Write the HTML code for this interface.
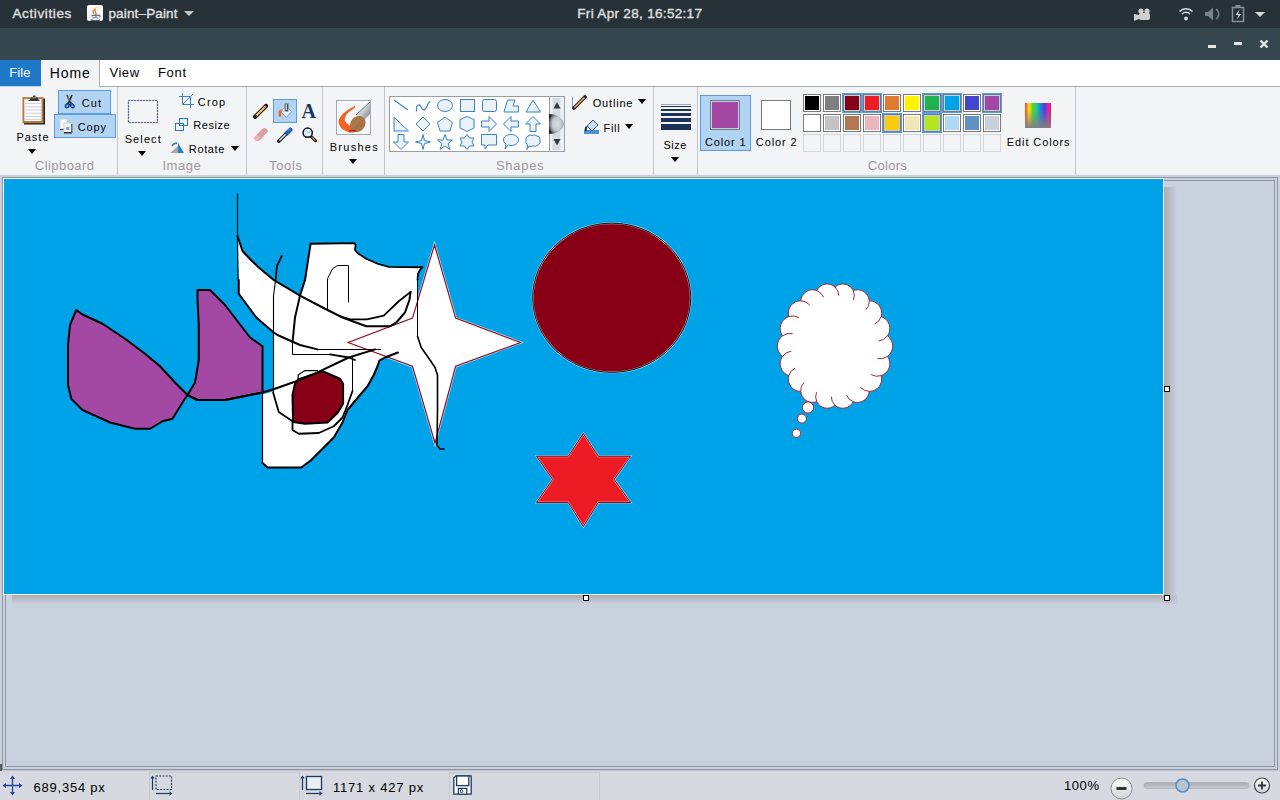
<!DOCTYPE html>
<html><head><meta charset="utf-8"><style>
html,body{margin:0;padding:0;width:1280px;height:800px;overflow:hidden;position:relative;background:#c9d1df}
.t{position:absolute;white-space:pre;font-family:"Liberation Sans",sans-serif}
svg{position:absolute}
</style></head><body>
<div style="position:absolute;left:0px;top:0px;width:1280px;height:28px;background:#263238"></div>
<div class="t" style="left:12.50px;top:6.77px;font-size:13.5px;line-height:13.5px;color:#e0e0e0;font-weight:400;letter-spacing:0.61px;-webkit-text-stroke:0.35px #e0e0e0">Activities</div>
<div style="position:absolute;left:87px;top:5px;width:16px;height:16px;background:linear-gradient(180deg,#ffffff,#eef0f4);border-radius:2px"></div>
<svg style="position:absolute;left:87px;top:5px" width="16" height="16">
<path d="M9.5 1.5 L10.5 3" stroke="#f0d070" stroke-width="1"/>
<path d="M8.5 3.5 Q7 5 8.5 6.5 Q9.5 8 8.5 10" stroke="#f07020" stroke-width="1.3" fill="none"/>
<path d="M6.5 5 Q5.5 6.5 6.5 8.5" stroke="#e85020" stroke-width="1.1" fill="none"/>
<path d="M4.5 11 Q8 9.5 12.5 10.5" stroke="#606870" stroke-width="1.2" fill="none"/>
<path d="M12 9.5 Q14 10.5 12.5 12.5" stroke="#606870" stroke-width="1" fill="none"/>
<path d="M5.5 13 Q8 12 11 13" stroke="#707880" stroke-width="1" fill="none"/>
<path d="M3.5 15 Q8 16.5 13 15" stroke="#404850" stroke-width="1.1" fill="none"/>
<circle cx="9" cy="11" r="0.8" fill="#3070c0"/><circle cx="5" cy="15" r="0.8" fill="#3070c0"/>
</svg>
<div class="t" style="left:108.40px;top:6.57px;font-size:13.5px;line-height:13.5px;color:#e0e0e0;font-weight:400;letter-spacing:0.16px;-webkit-text-stroke:0.35px #e0e0e0">paint–Paint</div>
<div style="position:absolute;left:184px;top:11px;width:0;height:0;border-left:5.0px solid transparent;border-right:5.0px solid transparent;border-top:5px solid #c8c8c8"></div>
<div class="t" style="left:577.30px;top:6.77px;font-size:13.5px;line-height:13.5px;color:#e0e0e0;font-weight:400;letter-spacing:0.32px;-webkit-text-stroke:0.35px #e0e0e0">Fri Apr 28, 16:52:17</div>
<svg style="position:absolute;left:1128px;top:0" width="150" height="28">
<g fill="#d0d0d0">
<circle cx="1141" cy="11" r="2.6" transform="translate(-1128,0)"/>
<circle cx="1147" cy="11" r="2.6" transform="translate(-1128,0)"/>
<rect x="11" y="13" width="11" height="7" rx="2"/>
<path d="M6 14 L11 15 L11 19 L6 21 Z"/>
</g>
<g fill="none" stroke="#d8d8d8" stroke-width="1.6">
<path d="M51.5 11.5 A9 9 0 0 1 64.5 11.5"/>
<path d="M54 14 A5.5 5.5 0 0 1 62 14"/>
</g>
<circle cx="58" cy="18.5" r="1.9" fill="#d8d8d8"/>
<g fill="#7b8388">
<path d="M77 12 h3 l5 -4.5 v13 l-5 -4.5 h-3 z"/>
</g>
<path d="M88 9 A6 6 0 0 1 88 19" stroke="#7b8388" stroke-width="1.5" fill="none"/>
<rect x="104.5" y="7.5" width="11" height="14" fill="none" stroke="#8a8f94" stroke-width="1.5"/>
<rect x="107.5" y="5" width="5" height="2" fill="#8a8f94"/>
<path d="M111.5 9.5 L107.5 15 h3 l-1.5 4.5 l4 -5.5 h-3 z" fill="#d8d8d8"/>
<path d="M127 12 h10 l-5 5 z" fill="#d8d8d8"/>
</svg>
<div style="position:absolute;left:0px;top:28px;width:1280px;height:32px;background:#37474f"></div>
<div style="position:absolute;left:1208px;top:45px;width:8px;height:3px;background:#e6e6e6"></div>
<div style="position:absolute;left:1234px;top:42px;width:8px;height:3px;background:#e6e6e6"></div>
<svg style="position:absolute;left:1258px;top:38px" width="12" height="12"><path d="M2.5 2.5 L9.5 9.5 M9.5 2.5 L2.5 9.5" stroke="#e6e6e6" stroke-width="2.4"/></svg>
<div style="position:absolute;left:0px;top:60px;width:1280px;height:26px;background:#ffffff"></div>
<div style="position:absolute;left:0px;top:60px;width:41px;height:26px;background:#1f77c7"></div>
<div class="t" style="left:9.20px;top:66.40px;font-size:13px;line-height:13px;color:#ffffff;font-weight:400;letter-spacing:0.1px;">File</div>
<div style="position:absolute;left:41px;top:60px;width:59px;height:27px;background:#f3f4f6;border-right:1px solid #a9adb2;box-sizing:border-box"></div>
<div style="position:absolute;left:100px;top:86px;width:1180px;height:1px;background:#a9adb2"></div>
<div class="t" style="left:49.80px;top:65.55px;font-size:14px;line-height:14px;color:#000;font-weight:400;letter-spacing:0.87px;">Home</div>
<div class="t" style="left:109.40px;top:66.40px;font-size:13px;line-height:13px;color:#000;font-weight:400;letter-spacing:0.57px;">View</div>
<div class="t" style="left:158.00px;top:66.40px;font-size:13px;line-height:13px;color:#000;font-weight:400;letter-spacing:0.67px;">Font</div>
<div style="position:absolute;left:0px;top:87px;width:1280px;height:88px;background:#f3f4f6"></div>
<div style="position:absolute;left:117px;top:87px;width:1px;height:88px;background:#c4c6ca"></div>
<div style="position:absolute;left:246px;top:87px;width:1px;height:88px;background:#c4c6ca"></div>
<div style="position:absolute;left:322px;top:87px;width:1px;height:88px;background:#c4c6ca"></div>
<div style="position:absolute;left:384px;top:87px;width:1px;height:88px;background:#c4c6ca"></div>
<div style="position:absolute;left:653px;top:87px;width:1px;height:88px;background:#c4c6ca"></div>
<div style="position:absolute;left:697px;top:87px;width:1px;height:88px;background:#c4c6ca"></div>
<div style="position:absolute;left:1075px;top:87px;width:1px;height:88px;background:#c4c6ca"></div>
<div class="t" style="left:34.80px;top:158.80px;font-size:13px;line-height:13px;color:#9c98a2;font-weight:400;letter-spacing:0.45px;">Clipboard</div>
<div class="t" style="left:162.40px;top:158.80px;font-size:13px;line-height:13px;color:#9c98a2;font-weight:400;letter-spacing:0.53px;">Image</div>
<div class="t" style="left:269.00px;top:158.80px;font-size:13px;line-height:13px;color:#9c98a2;font-weight:400;letter-spacing:0.65px;">Tools</div>
<div class="t" style="left:496.00px;top:158.80px;font-size:13px;line-height:13px;color:#9c98a2;font-weight:400;letter-spacing:0.7px;">Shapes</div>
<div class="t" style="left:867.75px;top:158.80px;font-size:13px;line-height:13px;color:#9c98a2;font-weight:400;letter-spacing:0.3px;">Colors</div>


<svg style="position:absolute;left:21px;top:94px" width="25" height="32">
<rect x="3" y="4.5" width="21" height="26" fill="#202020"/>
<rect x="1.5" y="3.2" width="21" height="26" fill="#b57a40"/>
<rect x="3.3" y="5" width="17.2" height="22" fill="#fbfbfd"/>
<g stroke="#c8d0d8" stroke-width="0.9"><path d="M3.5 9.5h17M3.5 12.8h17M3.5 16h17M3.5 19.3h17M3.5 22.5h17M3.5 25.5h17"/></g>
<path d="M8.5 6.5 L10 3.5 H11.5 L12.5 1.5 H14 L15 3.5 H16.5 L18 6.5 Z" fill="#303030"/>
<path d="M11.5 3.8 H15" stroke="#d0d0d0" stroke-width="0.8"/>
<rect x="7.5" y="5.8" width="11" height="1.2" fill="#404040"/>
</svg>
<div class="t" style="left:16.40px;top:132.29px;font-size:11px;line-height:11px;color:#000;font-weight:400;letter-spacing:1.0px;">Paste</div>
<div style="position:absolute;left:28px;top:149px;width:0;height:0;border-left:4.5px solid transparent;border-right:4.5px solid transparent;border-top:5px solid #000"></div>
<div style="position:absolute;left:58px;top:90px;width:53px;height:24px;background:#b3d3f2;border:1px solid #5a9de0;box-sizing:border-box"></div>
<div style="position:absolute;left:54px;top:114px;width:62px;height:24px;background:#b3d3f2;border:1px solid #5a9de0;box-sizing:border-box"></div>
<svg style="position:absolute;left:64px;top:94px" width="12" height="16">
<path d="M3 1 L6.8 9 M8 1 L4.5 9" stroke="#202020" stroke-width="1.6"/>
<path d="M3.6 1.5 L6.2 7.5" stroke="#b0b0b0" stroke-width="0.6"/>
<path d="M3.5 9 Q1 10 1 12.5 Q1.5 14.5 3.5 14 Q5.5 13 5.5 10 Z" fill="#1560d0" stroke="#0a1850" stroke-width="0.9"/>
<path d="M7.5 9 Q10 10 10.5 12.5 Q10 14.5 8 14 Q6 13 6 10 Z" fill="#1560d0" stroke="#0a1850" stroke-width="0.9"/>
<circle cx="3.2" cy="12" r="1" fill="#90c0f0"/><circle cx="8.3" cy="12" r="1" fill="#90c0f0"/>
</svg>
<div class="t" style="left:81.70px;top:98.09px;font-size:11px;line-height:11px;color:#000;font-weight:400;letter-spacing:1.15px;">Cut</div>
<svg style="position:absolute;left:60px;top:119px" width="13" height="15">
<rect x="0" y="0" width="7" height="10" fill="#fafafa"/>
<rect x="0" y="10" width="4" height="1" fill="#404040"/>
<rect x="0.5" y="0.5" width="6" height="9" fill="none" stroke="#e0e0e0" stroke-width="0.8"/>
<rect x="4" y="4" width="7.5" height="9.5" fill="#f4f6f8" stroke="#c8ccd0" stroke-width="0.8"/>
<rect x="4" y="13" width="8" height="1.5" fill="#303030"/>
<rect x="11.2" y="5" width="1.2" height="9" fill="#505050"/>
<rect x="6" y="8" width="3.5" height="3" fill="#7aa8d0"/>
</svg>
<div class="t" style="left:77.70px;top:122.29px;font-size:11px;line-height:11px;color:#000;font-weight:400;letter-spacing:0.87px;">Copy</div>
<svg style="position:absolute;left:127px;top:99px" width="32" height="26">
<rect x="1.5" y="1.5" width="29" height="22" fill="none" stroke="#b0b4bc" stroke-width="1.2"/>
<rect x="1.5" y="1.5" width="29" height="22" fill="none" stroke="#1a2e60" stroke-width="1.2" stroke-dasharray="1 2"/>
</svg>
<div class="t" style="left:124.70px;top:134.09px;font-size:11px;line-height:11px;color:#000;font-weight:400;letter-spacing:1.1px;">Select</div>
<div style="position:absolute;left:138px;top:151px;width:0;height:0;border-left:4.5px solid transparent;border-right:4.5px solid transparent;border-top:5px solid #000"></div>
<svg style="position:absolute;left:179px;top:93px" width="15" height="15">
<path d="M3.5 0 V11.5 H15 M0 3.5 H11.5 V15" stroke="#3b82c8" stroke-width="1" fill="none"/>
<path d="M4 11 L14 1" stroke="#3b82c8" stroke-width="1"/>
</svg>
<div class="t" style="left:197.80px;top:96.99px;font-size:11px;line-height:11px;color:#000;font-weight:400;letter-spacing:1.2px;">Crop</div>
<svg style="position:absolute;left:175px;top:118px" width="14" height="13">
<rect x="4.5" y="0.5" width="8" height="7" fill="#e8f0f8" stroke="#2a78c8"/>
<rect x="0.5" y="5.5" width="8" height="7" fill="none" stroke="#2a78c8"/>
</svg>
<div class="t" style="left:193.30px;top:119.99px;font-size:11px;line-height:11px;color:#000;font-weight:400;letter-spacing:0.54px;">Resize</div>
<svg style="position:absolute;left:170px;top:142px" width="15" height="12">
<path d="M0 11 L8 4 V11 Z" fill="#a8a8a8"/>
<path d="M8 1 L14 11 H8 Z" fill="#2a7ad0"/>
<path d="M2 4 Q4 1 7 1" stroke="#2a7ad0" stroke-width="1.3" fill="none"/>
</svg>
<div class="t" style="left:188.80px;top:143.69px;font-size:11px;line-height:11px;color:#000;font-weight:400;letter-spacing:0.64px;">Rotate</div>
<div style="position:absolute;left:231px;top:146px;width:0;height:0;border-left:4.5px solid transparent;border-right:4.5px solid transparent;border-top:5px solid #000"></div>
<div style="position:absolute;left:273px;top:99px;width:24px;height:24px;background:#b3d3f2;border:1px solid #5a9de0;box-sizing:border-box"></div>
<svg style="position:absolute;left:253px;top:103px" width="16" height="16">
<path d="M2.2 13.8 L13 3" stroke="#101010" stroke-width="4.2" stroke-linecap="round"/>
<path d="M3 13 L12.2 3.8" stroke="#f0b040" stroke-width="2.2"/>
<path d="M3.6 12 L11 4.6" stroke="#f8d890" stroke-width="0.8"/>
<path d="M11.2 4.8 L13 3" stroke="#e07080" stroke-width="2.2"/>
<path d="M2 14 L3.5 12.5" stroke="#303030" stroke-width="1.5"/>
</svg>
<svg style="position:absolute;left:276px;top:103px" width="18" height="17">
<path d="M10.2 3 L15.5 8.8 L10.2 14.5 L4.8 8.8 Z" fill="#e8f2fa" stroke="#6aa0c8" stroke-width="1"/>
<path d="M7 7 L10.2 3.5 L13 6.5 L9 10 Z" fill="#ffffff"/>
<rect x="8.6" y="0.5" width="3.8" height="8" fill="#505050"/>
<rect x="9.4" y="1.2" width="1.6" height="6" fill="#c0c0c0"/>
<path d="M5.5 6 Q3 6.5 2.5 9 L2.8 14 L5 13.5 L5.5 9 Z" fill="#f26a1a"/>
</svg>
<div class="t" style="left:301.5px;top:101px;font-family:'Liberation Serif',serif;font-weight:700;font-size:20px;line-height:20px;color:#1a3468;letter-spacing:0">A</div>
<svg style="position:absolute;left:253px;top:127px" width="16" height="15">
<path d="M1.5 10.5 L9.5 2 Q10.5 1 12 1.5 L14 2.5 Q15 3.5 14.5 4.5 L6.5 13 Q5.5 14 4 13.5 L2 12.5 Q1 11.5 1.5 10.5 Z" fill="#d8a0a0" stroke="#c89090" stroke-width="0.6"/>
<path d="M1.5 10.5 L4 8 L7 10.5 L4.5 13.5 Q3 13.5 2 12.5 Z" fill="#f0b8c4"/>
</svg>
<svg style="position:absolute;left:277px;top:127px" width="16" height="16">
<path d="M1.8 14.2 L9.5 6.5" stroke="#101010" stroke-width="3.4" stroke-linecap="round"/>
<path d="M2.4 13.6 L9 7" stroke="#e8f4fc" stroke-width="1.4"/>
<path d="M7.5 6 L10 8.5 L15 3.5 Q15.5 2 14 1 Q13 0.5 12 1.5 Z" fill="#1e66c8" stroke="#0a2a70" stroke-width="0.7"/>
<path d="M11 3.5 L13 1.5" stroke="#80b0f0" stroke-width="0.8"/>
</svg>
<svg style="position:absolute;left:302px;top:127px" width="15" height="16">
<path d="M9.2 9.5 L13.5 13.8" stroke="#101010" stroke-width="3" stroke-linecap="round"/>
<path d="M9.6 9.9 L13.2 13.5" stroke="#d09050" stroke-width="1.3"/>
<circle cx="5.7" cy="5.7" r="4.6" fill="#dff2fc" stroke="#101010" stroke-width="1.5"/>
<path d="M2.5 5 H9" stroke="#b0c8d8" stroke-width="1"/>
</svg>
<svg style="position:absolute;left:336px;top:100px" width="35" height="35">
<defs><linearGradient id="hd" x1="0" y1="0" x2="1" y2="1"><stop offset="0" stop-color="#ffffff"/><stop offset="0.5" stop-color="#c8ccd0"/><stop offset="1" stop-color="#6a7076"/></linearGradient></defs>
<rect x="0.5" y="0.5" width="34" height="34" fill="#f4f7fa" stroke="#a8aaae" stroke-width="1"/>
<path d="M34 2 L34 14 L26 22 L20 15 Z" fill="url(#hd)"/>
<path d="M34 2 L20 15" stroke="#50565c" stroke-width="0.8"/>
<path d="M19 6 Q17.5 5 18 6.5 Q14 8 9 12 Q3 17 2.5 22 Q3 29 12 32 Q16 33 19 32 L20 28 Q12 26 9 21 Q8 16 13 12 Q17 9 19 7.5 Z" fill="#f26424"/>
<ellipse cx="21.8" cy="24" rx="7.2" ry="8.6" transform="rotate(40 21.8 24)" fill="#a8784a"/>
<g fill="#c03040"><circle cx="24" cy="23" r="0.6"/><circle cx="26" cy="21" r="0.6"/><circle cx="22" cy="26" r="0.6"/><circle cx="25" cy="26" r="0.6"/><circle cx="20" cy="28" r="0.6"/><circle cx="27" cy="24" r="0.6"/></g>
<path d="M13 31 Q16 30 20 31" stroke="#b02030" stroke-width="1.5"/>
</svg>
<div class="t" style="left:329.70px;top:142.29px;font-size:11px;line-height:11px;color:#000;font-weight:400;letter-spacing:1.28px;">Brushes</div>
<div style="position:absolute;left:349px;top:159px;width:0;height:0;border-left:4.5px solid transparent;border-right:4.5px solid transparent;border-top:5px solid #000"></div>
<div style="position:absolute;left:389px;top:96px;width:176px;height:56px;background:#fff;border:1px solid #9a9ea4;box-sizing:border-box"></div>
<svg style="position:absolute;left:549px;top:96px" width="16" height="56">
<defs><radialGradient id="ball" cx="0.55" cy="0.5" r="0.6"><stop offset="0" stop-color="#dcdfe4"/><stop offset="0.55" stop-color="#c4c8cc"/><stop offset="0.85" stop-color="#707478"/><stop offset="1" stop-color="#202428"/></radialGradient></defs>
<rect x="0.5" y="0.5" width="15" height="55" fill="#eef2f6" stroke="#9a9ea4" stroke-width="1"/>
<rect x="3.5" y="2" width="8" height="52" fill="#d8dce2"/>
<path d="M4.5 12.5 L8 6 L11.5 12.5 Z" fill="#303840"/>
<path d="M4.5 43 L8 49.5 L11.5 43 Z" fill="#303840"/>
<path d="M0 18 A10 10 0 0 1 0 38 Z" fill="url(#ball)" transform="translate(0,0) scale(1.45,1) "/>
</svg>
<svg style="position:absolute;left:393px;top:99px;overflow:visible" width="17" height="17"><path d="M1 1 L15 11" stroke="#3a82c8" stroke-width="1.1" fill="none"/></svg>
<svg style="position:absolute;left:415px;top:99px;overflow:visible" width="17" height="17"><path d="M1.5 12.5 C1 6 4 4 6 8 C8 12 10 12 12 7 C13 4 14 3 15.5 2.5" stroke="#3a82c8" stroke-width="1.2" fill="none"/></svg>
<svg style="position:absolute;left:437px;top:99px;overflow:visible" width="17" height="17"><ellipse cx="8" cy="6.5" rx="7.5" ry="6" stroke="#3a82c8" fill="#eaf2f8"/></svg>
<svg style="position:absolute;left:459px;top:99px;overflow:visible" width="17" height="17"><rect x="1.5" y="0.5" width="14" height="12" stroke="#3a82c8" fill="#eaf2f8"/></svg>
<svg style="position:absolute;left:481px;top:99px;overflow:visible" width="17" height="17"><rect x="1.5" y="0.5" width="14" height="12" rx="2" stroke="#3a82c8" fill="#eaf2f8"/></svg>
<svg style="position:absolute;left:503px;top:99px;overflow:visible" width="17" height="17"><path d="M1 13 L4.5 1 H12 L10 7 H15.5 V13 Z" stroke="#3a82c8" fill="#eaf2f8"/></svg>
<svg style="position:absolute;left:525px;top:99px;overflow:visible" width="17" height="17"><path d="M1 13 L8 1 L15.5 13 Z" stroke="#3a82c8" fill="#eaf2f8"/></svg>
<svg style="position:absolute;left:393px;top:116px;overflow:visible" width="17" height="17"><path d="M1 1 L15.5 15 H1 Z" stroke="#3a82c8" fill="#eaf2f8"/></svg>
<svg style="position:absolute;left:415px;top:116px;overflow:visible" width="17" height="17"><path d="M8 1 L15 8 L8 15 L1 8 Z" stroke="#3a82c8" fill="#eaf2f8"/></svg>
<svg style="position:absolute;left:437px;top:116px;overflow:visible" width="17" height="17"><path d="M8 1 L15.5 6.5 L13 15 H3 L0.5 6.5 Z" stroke="#3a82c8" fill="#eaf2f8"/></svg>
<svg style="position:absolute;left:459px;top:116px;overflow:visible" width="17" height="17"><path d="M8 0.5 L15 3.5 V12 L8 15.5 L1 12 V3.5 Z" stroke="#3a82c8" fill="#eaf2f8"/></svg>
<svg style="position:absolute;left:481px;top:116px;overflow:visible" width="17" height="17"><path d="M0.5 5 H8 V0.5 L15.5 8 L8 15.5 V11 H0.5 Z" stroke="#3a82c8" fill="#eaf2f8"/></svg>
<svg style="position:absolute;left:503px;top:116px;overflow:visible" width="17" height="17"><path d="M15.5 5 H8 V0.5 L0.5 8 L8 15.5 V11 H15.5 Z" stroke="#3a82c8" fill="#eaf2f8"/></svg>
<svg style="position:absolute;left:525px;top:116px;overflow:visible" width="17" height="17"><path d="M5 15.5 V8 H0.5 L8 0.5 L15.5 8 H11 V15.5 Z" stroke="#3a82c8" fill="#eaf2f8"/></svg>
<svg style="position:absolute;left:393px;top:134px;overflow:visible" width="17" height="17"><path d="M5 0.5 V8 H0.5 L8 15.5 L15.5 8 H11 V0.5 Z" stroke="#3a82c8" fill="#eaf2f8"/></svg>
<svg style="position:absolute;left:415px;top:134px;overflow:visible" width="17" height="17"><path d="M8 0.5 L9.5 6.5 L15.5 8 L9.5 9.5 L8 15.5 L6.5 9.5 L0.5 8 L6.5 6.5 Z" stroke="#3a82c8" fill="#eaf2f8"/></svg>
<svg style="position:absolute;left:437px;top:134px;overflow:visible" width="17" height="17"><path d="M8 0.5 L10 6 H15.5 L11 9.5 L13 15.5 L8 12 L3 15.5 L5 9.5 L0.5 6 H6 Z" stroke="#3a82c8" fill="#eaf2f8"/></svg>
<svg style="position:absolute;left:459px;top:134px;overflow:visible" width="17" height="17"><path d="M8 0.5 L10.5 4 H15 L13 8 L15 12 H10.5 L8 15.5 L5.5 12 H1 L3 8 L1 4 H5.5 Z" stroke="#3a82c8" fill="#eaf2f8"/></svg>
<svg style="position:absolute;left:481px;top:134px;overflow:visible" width="17" height="17"><path d="M0.5 0.5 H15.5 V11 H7 L4 15 V11 H0.5 Z" stroke="#3a82c8" fill="#eaf2f8"/></svg>
<svg style="position:absolute;left:503px;top:134px;overflow:visible" width="17" height="17"><path d="M8 0.5 C13 0.5 15.5 3 15.5 6 C15.5 9.5 12 11.5 8 11.5 C6 11.5 5 11 5 11 L2 15 L3 10 C1.5 9 0.5 7.5 0.5 6 C0.5 3 3 0.5 8 0.5 Z" stroke="#3a82c8" fill="#eaf2f8"/></svg>
<svg style="position:absolute;left:525px;top:134px;overflow:visible" width="17" height="17"><path d="M3 2 Q5 0 7 1.5 Q10 0 12 2 Q15.5 2 15 6 Q16 9 13 11 Q11 13 8 12 Q6 13 4 12 L2 15.5 L2.5 11 Q0 9 1 6 Q0 3 3 2 Z" stroke="#3a82c8" fill="#eaf2f8"/></svg>
<svg style="position:absolute;left:571px;top:95px" width="17" height="15">
<path d="M1.5 2 V14" stroke="#6aa0d8" stroke-width="1"/>
<path d="M3 13 L14 2" stroke="#202020" stroke-width="3.6" stroke-linecap="round"/>
<path d="M3.5 12.5 L13.5 2.5" stroke="#f0a868" stroke-width="1.6"/>
</svg>
<div class="t" style="left:592.70px;top:98.09px;font-size:11px;line-height:11px;color:#000;font-weight:400;letter-spacing:0.82px;">Outline</div>
<div style="position:absolute;left:638px;top:99px;width:0;height:0;border-left:4.5px solid transparent;border-right:4.5px solid transparent;border-top:5px solid #000"></div>
<svg style="position:absolute;left:584px;top:119px" width="16" height="16">
<rect x="0" y="11" width="15" height="4" fill="#4a90d8"/>
<path d="M9 1 L14 6 L8 12 L3 7 Z" fill="#c8e0f0" stroke="#405060"/>
<path d="M3 8 Q1 9 2 12" stroke="#1a2a40" stroke-width="2" fill="none"/>
</svg>
<div class="t" style="left:603.50px;top:122.89px;font-size:11px;line-height:11px;color:#000;font-weight:400;letter-spacing:0.7px;">Fill</div>
<div style="position:absolute;left:625px;top:124px;width:0;height:0;border-left:4.5px solid transparent;border-right:4.5px solid transparent;border-top:5px solid #000"></div>
<div style="position:absolute;left:661px;top:104px;width:30px;height:1px;background:#a0a8b8"></div>
<div style="position:absolute;left:661px;top:106px;width:30px;height:1px;background:#1c3358"></div>
<div style="position:absolute;left:661px;top:109px;width:30px;height:2px;background:#1c3358"></div>
<div style="position:absolute;left:661px;top:113px;width:30px;height:3px;background:#1c3358"></div>
<div style="position:absolute;left:661px;top:118px;width:30px;height:4px;background:#1c3358"></div>
<div style="position:absolute;left:661px;top:124px;width:30px;height:6px;background:#1c3358"></div>
<div class="t" style="left:663.50px;top:139.99px;font-size:11px;line-height:11px;color:#000;font-weight:400;letter-spacing:0.5px;">Size</div>
<div style="position:absolute;left:671px;top:157px;width:0;height:0;border-left:4.5px solid transparent;border-right:4.5px solid transparent;border-top:5px solid #000"></div>
<div style="position:absolute;left:700px;top:95px;width:51px;height:56px;background:#b3d3f2;border:1px solid #5a9de0;box-sizing:border-box"></div>
<div style="position:absolute;left:710px;top:100px;width:30px;height:30px;background:#b3d3f2;border:1px solid #7a7a7a;box-sizing:border-box"></div>
<div style="position:absolute;left:712px;top:102px;width:26px;height:26px;background:#a349a4"></div>
<div class="t" style="left:704.90px;top:136.89px;font-size:11px;line-height:11px;color:#000;font-weight:400;letter-spacing:0.88px;">Color 1</div>
<div style="position:absolute;left:761px;top:100px;width:30px;height:30px;background:#fff;border:1px solid #7a7a7a;box-sizing:border-box"></div>
<div class="t" style="left:755.80px;top:136.89px;font-size:11px;line-height:11px;color:#000;font-weight:400;letter-spacing:0.9px;">Color 2</div>
<div style="position:absolute;left:803px;top:94px;width:18px;height:18px;background:#fff;border:1px solid #7a7a7a;box-sizing:border-box"></div>
<div style="position:absolute;left:805px;top:96px;width:14px;height:14px;background:#000000"></div>
<div style="position:absolute;left:803px;top:114px;width:18px;height:18px;background:#fff;border:1px solid #7a7a7a;box-sizing:border-box"></div>
<div style="position:absolute;left:805px;top:116px;width:14px;height:14px;background:#ffffff"></div>
<div style="position:absolute;left:803px;top:134px;width:18px;height:18px;border:1px solid #d4d6da;box-sizing:border-box"></div>
<div style="position:absolute;left:823px;top:94px;width:18px;height:18px;background:#fff;border:1px solid #7a7a7a;box-sizing:border-box"></div>
<div style="position:absolute;left:825px;top:96px;width:14px;height:14px;background:#7f7f7f"></div>
<div style="position:absolute;left:823px;top:114px;width:18px;height:18px;background:#fff;border:1px solid #7a7a7a;box-sizing:border-box"></div>
<div style="position:absolute;left:825px;top:116px;width:14px;height:14px;background:#c3c3c3"></div>
<div style="position:absolute;left:823px;top:134px;width:18px;height:18px;border:1px solid #d4d6da;box-sizing:border-box"></div>
<div style="position:absolute;left:842px;top:93px;width:20px;height:20px;background:#5a9de0"></div>
<div style="position:absolute;left:843px;top:94px;width:18px;height:18px;background:#b3d3f2;border:1px solid #7a7a7a;box-sizing:border-box"></div>
<div style="position:absolute;left:845px;top:96px;width:14px;height:14px;background:#880015"></div>
<div style="position:absolute;left:843px;top:114px;width:18px;height:18px;background:#fff;border:1px solid #7a7a7a;box-sizing:border-box"></div>
<div style="position:absolute;left:845px;top:116px;width:14px;height:14px;background:#b07850"></div>
<div style="position:absolute;left:843px;top:134px;width:18px;height:18px;border:1px solid #d4d6da;box-sizing:border-box"></div>
<div style="position:absolute;left:862px;top:93px;width:20px;height:20px;background:#5a9de0"></div>
<div style="position:absolute;left:863px;top:94px;width:18px;height:18px;background:#b3d3f2;border:1px solid #7a7a7a;box-sizing:border-box"></div>
<div style="position:absolute;left:865px;top:96px;width:14px;height:14px;background:#ed1c24"></div>
<div style="position:absolute;left:863px;top:114px;width:18px;height:18px;background:#fff;border:1px solid #7a7a7a;box-sizing:border-box"></div>
<div style="position:absolute;left:865px;top:116px;width:14px;height:14px;background:#ebb6c0"></div>
<div style="position:absolute;left:863px;top:134px;width:18px;height:18px;border:1px solid #d4d6da;box-sizing:border-box"></div>
<div style="position:absolute;left:883px;top:94px;width:18px;height:18px;background:#fff;border:1px solid #7a7a7a;box-sizing:border-box"></div>
<div style="position:absolute;left:885px;top:96px;width:14px;height:14px;background:#e07b30"></div>
<div style="position:absolute;left:882px;top:113px;width:20px;height:20px;background:#5a9de0"></div>
<div style="position:absolute;left:883px;top:114px;width:18px;height:18px;background:#b3d3f2;border:1px solid #7a7a7a;box-sizing:border-box"></div>
<div style="position:absolute;left:885px;top:116px;width:14px;height:14px;background:#ffc90e"></div>
<div style="position:absolute;left:883px;top:134px;width:18px;height:18px;border:1px solid #d4d6da;box-sizing:border-box"></div>
<div style="position:absolute;left:903px;top:94px;width:18px;height:18px;background:#fff;border:1px solid #7a7a7a;box-sizing:border-box"></div>
<div style="position:absolute;left:905px;top:96px;width:14px;height:14px;background:#fff200"></div>
<div style="position:absolute;left:903px;top:114px;width:18px;height:18px;background:#fff;border:1px solid #7a7a7a;box-sizing:border-box"></div>
<div style="position:absolute;left:905px;top:116px;width:14px;height:14px;background:#f0e6b8"></div>
<div style="position:absolute;left:903px;top:134px;width:18px;height:18px;border:1px solid #d4d6da;box-sizing:border-box"></div>
<div style="position:absolute;left:922px;top:93px;width:20px;height:20px;background:#5a9de0"></div>
<div style="position:absolute;left:923px;top:94px;width:18px;height:18px;background:#b3d3f2;border:1px solid #7a7a7a;box-sizing:border-box"></div>
<div style="position:absolute;left:925px;top:96px;width:14px;height:14px;background:#22b14c"></div>
<div style="position:absolute;left:922px;top:113px;width:20px;height:20px;background:#5a9de0"></div>
<div style="position:absolute;left:923px;top:114px;width:18px;height:18px;background:#b3d3f2;border:1px solid #7a7a7a;box-sizing:border-box"></div>
<div style="position:absolute;left:925px;top:116px;width:14px;height:14px;background:#b5e61d"></div>
<div style="position:absolute;left:923px;top:134px;width:18px;height:18px;border:1px solid #d4d6da;box-sizing:border-box"></div>
<div style="position:absolute;left:942px;top:93px;width:20px;height:20px;background:#5a9de0"></div>
<div style="position:absolute;left:943px;top:94px;width:18px;height:18px;background:#b3d3f2;border:1px solid #7a7a7a;box-sizing:border-box"></div>
<div style="position:absolute;left:945px;top:96px;width:14px;height:14px;background:#00a2e8"></div>
<div style="position:absolute;left:943px;top:114px;width:18px;height:18px;background:#fff;border:1px solid #7a7a7a;box-sizing:border-box"></div>
<div style="position:absolute;left:945px;top:116px;width:14px;height:14px;background:#b0d6f4"></div>
<div style="position:absolute;left:943px;top:134px;width:18px;height:18px;border:1px solid #d4d6da;box-sizing:border-box"></div>
<div style="position:absolute;left:963px;top:94px;width:18px;height:18px;background:#fff;border:1px solid #7a7a7a;box-sizing:border-box"></div>
<div style="position:absolute;left:965px;top:96px;width:14px;height:14px;background:#3f48cc"></div>
<div style="position:absolute;left:963px;top:114px;width:18px;height:18px;background:#fff;border:1px solid #7a7a7a;box-sizing:border-box"></div>
<div style="position:absolute;left:965px;top:116px;width:14px;height:14px;background:#6090c4"></div>
<div style="position:absolute;left:963px;top:134px;width:18px;height:18px;border:1px solid #d4d6da;box-sizing:border-box"></div>
<div style="position:absolute;left:982px;top:93px;width:20px;height:20px;background:#5a9de0"></div>
<div style="position:absolute;left:983px;top:94px;width:18px;height:18px;background:#b3d3f2;border:1px solid #7a7a7a;box-sizing:border-box"></div>
<div style="position:absolute;left:985px;top:96px;width:14px;height:14px;background:#a349a4"></div>
<div style="position:absolute;left:983px;top:114px;width:18px;height:18px;background:#fff;border:1px solid #7a7a7a;box-sizing:border-box"></div>
<div style="position:absolute;left:985px;top:116px;width:14px;height:14px;background:#c8d0de"></div>
<div style="position:absolute;left:983px;top:134px;width:18px;height:18px;border:1px solid #d4d6da;box-sizing:border-box"></div>
<svg style="position:absolute;left:1025px;top:103px" width="26" height="25">
<defs><linearGradient id="rb" x1="0" x2="1" y1="0" y2="0">
<stop offset="0" stop-color="#f04020"/><stop offset="0.15" stop-color="#f8e020"/><stop offset="0.3" stop-color="#60d020"/>
<stop offset="0.45" stop-color="#20c8a0"/><stop offset="0.6" stop-color="#2080e0"/><stop offset="0.75" stop-color="#5040d0"/>
<stop offset="0.9" stop-color="#e020c0"/><stop offset="1" stop-color="#f02020"/></linearGradient>
<linearGradient id="gr" x1="0" x2="0" y1="0" y2="1"><stop offset="0.3" stop-color="#808080" stop-opacity="0"/><stop offset="1" stop-color="#808080" stop-opacity="1"/></linearGradient></defs>
<rect width="26" height="25" fill="url(#rb)"/><rect width="26" height="25" fill="url(#gr)"/>
</svg>
<div class="t" style="left:1006.80px;top:136.89px;font-size:11px;line-height:11px;color:#000;font-weight:400;letter-spacing:0.9px;">Edit Colors</div>
<div style="position:absolute;left:0px;top:175px;width:1280px;height:596px;background:#c9d1df"></div>
<div style="position:absolute;left:2px;top:177px;width:1276px;height:593px;border:1px solid #8f959e;box-sizing:border-box"></div>
<div style="position:absolute;left:5px;top:180px;width:1270px;height:587px;border:1px solid #8f959e;box-sizing:border-box"></div>
<div style="position:absolute;left:1164px;top:187px;width:13px;height:408px;background:linear-gradient(90deg,#aaacb0,#c9d1df)"></div>
<div style="position:absolute;left:12px;top:595px;width:1152px;height:9px;background:linear-gradient(180deg,#aaacb0,#c9d1df)"></div>
<div style="position:absolute;left:1164px;top:595px;width:13px;height:9px;background:radial-gradient(ellipse at 0 0,#aaacb0,#c9d1df 100%)"></div>
<div style="position:absolute;left:3px;top:178px;width:1161px;height:417px;background:#ffffff"></div>
<div style="position:absolute;left:4px;top:179px;width:1159px;height:415px;background:#00a2e8;overflow:hidden"><svg style="position:absolute;left:0;top:0" width="1159" height="415" viewBox="4 179 1159 415" shape-rendering="geometricPrecision">
<polygon points="76.25,310.00 82.50,314.50 102.50,323.75 125.00,338.75 145.00,353.75 160.00,366.25 175.00,382.50 187.50,395.00 182.50,402.50 172.50,418.75 162.50,421.25 150.00,428.75 135.00,428.75 110.00,422.50 82.50,410.00 71.25,398.75 68.00,385.00 68.00,345.00 70.00,325.00" fill="#a349a4" stroke="#000" stroke-width="2" stroke-linejoin="round"/>
<polygon points="197.50,290.00 210.00,290.00 225.00,305.00 250.00,337.50 262.50,346.25 262.50,392.50 225.00,400.00 197.50,400.00 190.00,396.25 187.50,395.00 195.00,382.50 198.75,360.00 198.75,325.00 197.50,300.00" fill="#a349a4" stroke="#000" stroke-width="2" stroke-linejoin="round"/>
<polygon points="237.50,236.00 242.50,251.00 250.00,259.00 258.75,267.50 273.75,280.00 300.00,295.60 305.00,280.00 310.60,243.75 354.40,243.10 355.60,245.00 355.00,250.00 357.50,253.00 366.25,258.75 377.50,263.75 388.75,266.90 422.50,267.25 420.00,270.00 418.00,273.75 417.50,280.00 417.50,320.00 400.00,352.00 398.00,352.50 385.00,357.50 379.40,360.60 377.50,366.25 373.75,375.00 367.50,386.25 360.00,395.00 347.50,410.00 342.50,422.50 333.75,437.50 311.25,460.00 301.25,467.50 267.50,467.50 262.50,463.00 262.50,394.40 273.10,391.50 273.10,332.50 256.25,317.50 238.75,293.75 238.75,280.00" fill="#fff"/>
<polygon points="434.50,245.00 455.60,318.10 520.50,342.50 455.60,366.25 435.00,443.00 412.50,366.25 348.10,342.50 412.50,318.10" fill="#fff" stroke="#fff" stroke-width="2.4" stroke-opacity="0.75"/>
<polygon points="434.50,245.00 455.60,318.10 520.50,342.50 455.60,366.25 435.00,443.00 412.50,366.25 348.10,342.50 412.50,318.10" fill="none" stroke="#8e0c1e" stroke-width="1.15"/>
<polygon points="322.50,371.25 340.00,378.75 343.10,383.75 343.10,403.75 337.50,413.10 327.50,422.50 305.00,423.75 293.10,421.90 292.50,395.00 295.00,383.75 298.10,379.40" fill="#880015" stroke="#000" stroke-width="2" stroke-linejoin="round"/>
<polyline points="237.50,194.00 237.50,236.00 238.00,280.00" fill="none" stroke="#000" stroke-width="1.2" stroke-linejoin="round" stroke-linecap="round"/>
<polyline points="237.50,236.00 242.50,251.00 250.00,259.00 258.75,267.50 273.75,280.00 300.00,295.60 325.00,308.75 342.50,317.50 366.25,326.25 390.00,326.25 396.25,322.50 405.00,312.50 409.40,300.00 410.60,291.90" fill="none" stroke="#000" stroke-width="2" stroke-linejoin="round" stroke-linecap="round"/>
<polyline points="340.00,316.25 350.00,319.40 366.90,319.40 383.75,315.60 398.75,301.25 410.60,291.90" fill="none" stroke="#000" stroke-width="1.8" stroke-linejoin="round" stroke-linecap="round"/>
<polyline points="238.75,280.00 238.75,293.75 256.25,317.50 273.75,332.50 277.50,335.00 300.00,345.00 317.50,349.40" fill="none" stroke="#000" stroke-width="2" stroke-linejoin="round" stroke-linecap="round"/>
<polyline points="317.50,349.50 380.60,349.50" fill="none" stroke="#000" stroke-width="1" stroke-linejoin="round" stroke-linecap="round"/>
<polyline points="281.90,255.60 276.90,266.25 275.60,280.00" fill="none" stroke="#000" stroke-width="1.8" stroke-linejoin="round" stroke-linecap="round"/>
<polyline points="275.60,280.00 273.50,296.00 273.50,332.50 273.50,392.50" fill="none" stroke="#000" stroke-width="1.1" stroke-linejoin="round" stroke-linecap="round"/>
<polyline points="273.10,392.50 278.75,411.90 292.50,421.25" fill="none" stroke="#000" stroke-width="1.8" stroke-linejoin="round" stroke-linecap="round"/>
<polyline points="310.60,243.75 305.00,280.00 300.00,295.60 295.00,317.50 292.50,342.50" fill="none" stroke="#000" stroke-width="2" stroke-linejoin="round" stroke-linecap="round"/>
<polyline points="292.50,342.50 292.50,354.50 330.00,354.50" fill="none" stroke="#000" stroke-width="1" stroke-linejoin="round" stroke-linecap="round"/>
<polyline points="330.00,354.40 348.75,357.50 355.00,360.00" fill="none" stroke="#000" stroke-width="1.8" stroke-linejoin="round" stroke-linecap="round"/>
<polyline points="352.50,357.50 352.50,391.00" fill="none" stroke="#000" stroke-width="1" stroke-linejoin="round" stroke-linecap="round"/>
<polyline points="310.60,243.75 354.40,243.10 355.60,245.00 355.00,250.00 357.50,253.00 366.25,258.75 377.50,263.75 388.75,266.90 422.50,267.25 420.00,270.00 418.00,273.75 417.50,280.00" fill="none" stroke="#000" stroke-width="1.8" stroke-linejoin="round" stroke-linecap="round"/>
<polyline points="417.50,280.00 417.50,336.25" fill="none" stroke="#000" stroke-width="1" stroke-linejoin="round" stroke-linecap="round"/>
<polyline points="417.50,336.25 421.25,347.50 430.00,360.00 435.00,367.50 437.50,375.00 437.50,410.00 437.00,445.00 440.00,449.00 444.00,449.00" fill="none" stroke="#000" stroke-width="1.6" stroke-linejoin="round" stroke-linecap="round"/>
<polyline points="327.50,310.00 327.50,278.75 332.50,268.75 337.50,265.50 348.50,265.50 348.50,302.00" fill="none" stroke="#000" stroke-width="1" stroke-linejoin="round" stroke-linecap="round"/>
<polyline points="187.50,395.00 190.00,396.25 197.50,400.00 225.00,400.00 262.50,392.50 275.00,388.75 296.25,381.25 317.50,372.50 323.75,369.40 348.75,357.50 375.00,349.40" fill="none" stroke="#000" stroke-width="2" stroke-linejoin="round" stroke-linecap="round"/>
<polyline points="398.00,352.50 385.00,357.50 379.40,360.60 377.50,366.25 373.75,375.00 367.50,386.25 360.00,395.00 347.50,410.00 342.50,422.50 333.75,437.50 311.25,460.00 301.25,467.50 267.50,467.50 262.50,463.00" fill="none" stroke="#000" stroke-width="2" stroke-linejoin="round" stroke-linecap="round"/>
<polyline points="262.50,463.00 262.50,394.40" fill="none" stroke="#000" stroke-width="1.2" stroke-linejoin="round" stroke-linecap="round"/>
<polyline points="352.50,391.00 347.50,405.00 342.50,417.50 333.75,426.25 318.75,433.00 298.75,433.75 292.50,430.00 292.50,422.00" fill="none" stroke="#000" stroke-width="1.8" stroke-linejoin="round" stroke-linecap="round"/>
<polyline points="298.10,379.40 298.10,375.00 305.00,370.60 317.50,370.60" fill="none" stroke="#000" stroke-width="1.2" stroke-linejoin="round" stroke-linecap="round"/>
<ellipse cx="611.7" cy="297.75" rx="79" ry="74.6" fill="#880015" stroke="#ffffff" stroke-width="2" stroke-opacity="0.55"/>
<ellipse cx="611.7" cy="297.75" rx="79" ry="74.6" fill="none" stroke="#101010" stroke-width="1"/>
<polygon points="583.30,433.50 598.30,456.30 630.60,456.30 614.20,479.40 630.60,502.50 598.30,502.50 583.30,526.50 568.30,502.50 536.50,502.50 552.70,479.40 536.50,456.30 568.30,456.30" fill="#ed1c24" stroke="#ffffff" stroke-width="2" stroke-opacity="0.5"/>
<polygon points="583.30,433.50 598.30,456.30 630.60,456.30 614.20,479.40 630.60,502.50 598.30,502.50 583.30,526.50 568.30,502.50 536.50,502.50 552.70,479.40 536.50,456.30 568.30,456.30" fill="none" stroke="#8a0a1a" stroke-width="1"/>
<path d="M835.00,287.00 A11.52,11.52 0 0 1 853.23,290.56 A11.80,11.80 0 0 1 869.26,300.83 A12.23,12.23 0 0 1 881.16,316.55 A12.59,12.59 0 0 1 887.49,335.84 A12.73,12.73 0 0 1 887.49,356.36 A12.59,12.59 0 0 1 881.16,375.65 A12.23,12.23 0 0 1 869.26,391.37 A11.80,11.80 0 0 1 853.23,401.64 A11.52,11.52 0 0 1 835.00,405.20 A11.52,11.52 0 0 1 816.77,401.64 A11.80,11.80 0 0 1 800.74,391.37 A12.23,12.23 0 0 1 788.84,375.65 A12.59,12.59 0 0 1 782.51,356.36 A12.73,12.73 0 0 1 782.51,335.84 A12.59,12.59 0 0 1 788.84,316.55 A12.23,12.23 0 0 1 800.74,300.83 A11.80,11.80 0 0 1 816.77,290.56 A11.52,11.52 0 0 1 835.00,287.00 Z" fill="#fff" stroke="#a02832" stroke-width="1"/>
<path d="M853.23,290.56 A11.52,11.52 0 0 1 853.42,299.93 M869.26,300.83 A11.80,11.80 0 0 1 865.92,309.83 M881.16,316.55 A12.23,12.23 0 0 1 874.68,324.10 M887.49,335.84 A12.59,12.59 0 0 1 878.66,341.02 M887.49,356.36 A12.73,12.73 0 0 1 877.37,358.56 M881.16,375.65 A12.59,12.59 0 0 1 870.98,374.59 M869.26,391.37 A12.23,12.23 0 0 1 860.24,387.19 M853.23,401.64 A11.80,11.80 0 0 1 846.46,394.83 M835.00,405.20 A11.52,11.52 0 0 1 831.29,396.60 M816.77,401.64 A11.52,11.52 0 0 1 816.58,392.27 M800.74,391.37 A11.80,11.80 0 0 1 804.08,382.37 M788.84,375.65 A12.23,12.23 0 0 1 795.32,368.10 M782.51,356.36 A12.59,12.59 0 0 1 791.34,351.18 M782.51,335.84 A12.73,12.73 0 0 1 792.63,333.64 M788.84,316.55 A12.59,12.59 0 0 1 799.02,317.61 M800.74,300.83 A12.23,12.23 0 0 1 809.76,305.01 M816.77,290.56 A11.80,11.80 0 0 1 823.54,297.37 M835.00,287.00 A11.52,11.52 0 0 1 838.71,295.60" fill="none" stroke="#a02832" stroke-width="1"/>
<circle cx="808" cy="407.5" r="5.6" fill="#fff" stroke="#a02832" stroke-width="1"/>
<circle cx="801.9" cy="418.6" r="4.5" fill="#fff" stroke="#a02832" stroke-width="1"/>
<circle cx="796.4" cy="433.3" r="4.2" fill="#fff" stroke="#a02832" stroke-width="1"/>
</svg></div>
<div style="position:absolute;left:1164px;top:386px;width:6px;height:6px;background:#fff;border:1px solid #000;box-sizing:border-box"></div>
<div style="position:absolute;left:583px;top:595px;width:6px;height:6px;background:#fff;border:1px solid #000;box-sizing:border-box"></div>
<div style="position:absolute;left:1164px;top:595px;width:6px;height:6px;background:#fff;border:1px solid #000;box-sizing:border-box"></div>
<div style="position:absolute;left:0px;top:764px;width:2px;height:36px;background:#5a5e62"></div>
<div style="position:absolute;left:0px;top:771px;width:1280px;height:29px;background:#d6d9df"></div>
<div style="position:absolute;left:2px;top:770px;width:1276px;height:1px;background:#c0c4cc"></div>
<div style="position:absolute;left:149px;top:773px;width:1px;height:27px;background:#c4c8ce"></div>
<div style="position:absolute;left:299px;top:773px;width:1px;height:27px;background:#c4c8ce"></div>
<div style="position:absolute;left:449px;top:773px;width:1px;height:27px;background:#c4c8ce"></div>
<div style="position:absolute;left:599px;top:773px;width:1px;height:27px;background:#c4c8ce"></div>
<svg style="position:absolute;left:2px;top:775px" width="21" height="21">
<path d="M10.5 2 V19 M2 10.5 H19" stroke="#1d4a9a" stroke-width="1.3"/>
<path d="M10.5 0.5 L8 4 H13 Z M10.5 20.5 L8 17 H13 Z M0.5 10.5 L4 8 V13 Z M20.5 10.5 L17 8 V13 Z" fill="#1d4a9a"/>
</svg>
<div class="t" style="left:33.50px;top:781.00px;font-size:13px;line-height:13px;color:#000;font-weight:400;letter-spacing:0.78px;">689,354 px</div>
<div style="position:absolute;left:149px;top:772px;width:151px;height:28px;border:1px solid #c6c8cc;border-bottom:none;box-sizing:border-box"></div>
<svg style="position:absolute;left:150px;top:775px" width="24" height="22">
<rect x="6" y="1" width="15.5" height="13.5" fill="none" stroke="#1f3a60" stroke-width="1.1" stroke-dasharray="2 1.2"/>
<path d="M2.5 2.5 V15" stroke="#1f3a60" stroke-width="1.2"/><path d="M2.5 0.5 L0.3 3.5 H4.7 Z" fill="#1f3a60"/>
<path d="M6 18.5 H20" stroke="#1f3a60" stroke-width="1.2"/><path d="M22.5 18.5 L19.5 16.3 V20.7 Z" fill="#1f3a60"/>
</svg>
<svg style="position:absolute;left:300px;top:775px" width="24" height="22">
<rect x="6.5" y="1.5" width="15" height="13" fill="#e8eef4" stroke="#1f3a60" stroke-width="1.3"/>
<path d="M2.5 2.5 V15" stroke="#1f3a60" stroke-width="1.2"/><path d="M2.5 0.5 L0.3 3.5 H4.7 Z" fill="#1f3a60"/>
<path d="M6 18.5 H20" stroke="#1f3a60" stroke-width="1.2"/><path d="M22.5 18.5 L19.5 16.3 V20.7 Z" fill="#1f3a60"/>
</svg>
<div class="t" style="left:333.00px;top:781.00px;font-size:13px;line-height:13px;color:#000;font-weight:400;letter-spacing:0.79px;">1171 x 427 px</div>
<div style="position:absolute;left:449px;top:772px;width:151px;height:28px;border:1px solid #c6c8cc;border-bottom:none;box-sizing:border-box"></div>
<svg style="position:absolute;left:453px;top:775px" width="20" height="21">
<path d="M0.8 3 L3 0.8 H18.2 V19.2 H0.8 Z" fill="#f6f9fb" stroke="#1f3a60" stroke-width="1.3"/>
<rect x="3.6" y="1" width="12.2" height="9.6" fill="#ffffff" stroke="#1f3a60" stroke-width="1.3"/>
<rect x="5.4" y="13.4" width="8.4" height="5.8" fill="#ffffff" stroke="#1f3a60" stroke-width="1.2"/>
<ellipse cx="8.6" cy="16.2" rx="1.2" ry="1.5" fill="none" stroke="#1f3a60" stroke-width="1"/>
</svg>
<div class="t" style="left:1064.00px;top:779.00px;font-size:13px;line-height:13px;color:#000;font-weight:400;letter-spacing:0.58px;">100%</div>
<svg style="position:absolute;left:1108px;top:776px" width="166" height="24">
<defs><linearGradient id="bt" x1="0" x2="0" y1="0" y2="1"><stop offset="0" stop-color="#ffffff"/><stop offset="1" stop-color="#d0d4d8"/></linearGradient>
<linearGradient id="tr" x1="0" x2="0" y1="0" y2="1"><stop offset="0" stop-color="#a8acb0"/><stop offset="1" stop-color="#c8ccd0"/></linearGradient></defs>
<circle cx="13.5" cy="12.5" r="10.5" fill="url(#bt)" stroke="#8a8e94" stroke-width="1"/>
<rect x="8.5" y="11" width="10" height="3" fill="#303438"/>
<rect x="36" y="6.5" width="105" height="6" rx="3" fill="url(#tr)" stroke="#a0a4a8" stroke-width="0.5"/>
<circle cx="74.5" cy="9.5" r="6.5" fill="#b8c4d0" stroke="#4a90d0" stroke-width="1.5"/>
<circle cx="154" cy="9.5" r="7.5" fill="url(#bt)" stroke="#404448" stroke-width="1.2"/>
<path d="M150 9.5 H158 M154 5.5 V13.5" stroke="#303438" stroke-width="1.8"/>
</svg>
</body></html>
